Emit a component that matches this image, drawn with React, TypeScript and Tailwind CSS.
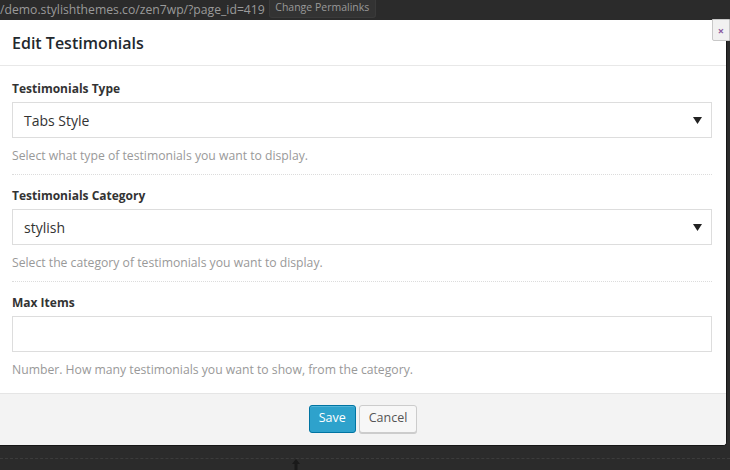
import React from "react";

// Edit Testimonials shortcode dialog, on top of the dark WP admin backdrop.

const font = { fontFamily: '"Open Sans", "Noto Sans", sans-serif' };

function Caret() {
  return (
    <svg width="9" height="7" viewBox="0 0 9 7" className="shrink-0">
      <path d="M0 0 L9 0 L4.5 7 Z" fill="#222" />
    </svg>
  );
}

type FieldProps = {
  label: string;
  help: string;
  value?: string;
  select?: boolean;
  first?: boolean;
  last?: boolean;
};

function Field({ label, help, value, select, first, last }: FieldProps) {
  return (
    <div className={(first ? "pt-[14px]" : "pt-[12px]") + (last ? " pb-[14px]" : "")}>
      <div className="text-[12px] leading-[18px] font-bold text-[#333]">{label}</div>
      <div className="mt-[4px] flex h-[36px] items-center justify-between border border-[#dddddd] bg-white pl-[11px] pr-[9px] text-[14px] text-[#333]">
        <span>{value}</span>
        {select && <Caret />}
      </div>
      <div className="mt-[9px] text-[12.2px] leading-[18px] text-[#999]">{help}</div>
      {!last && <div className="mt-[9px] border-b border-dotted border-[#dcdcdc]" />}
    </div>
  );
}

export default function App() {
  return (
    <div style={font} className="relative h-[470px] w-[730px] overflow-hidden bg-[#2b2b2b]">
      {/* admin page behind the modal */}
      <div className="flex h-[20px] items-center gap-[4px] bg-[#2b2b2b]">
        <span className="text-[12.2px] text-[#9a9a9a] whitespace-nowrap">
          /demo.stylishthemes.co/zen7wp/?page_id=419
        </span>
        <span className="-mt-[3px] flex h-[19px] w-[107px] items-center justify-center rounded-b-[3px] border border-t-0 border-[#3a3a3a] bg-[#333] text-[10.5px] text-[#999]">
          Change Permalinks
        </span>
      </div>

      <div className="flex h-[426px] w-[727px] flex-col overflow-hidden rounded-br-[4px] border-r border-b border-[#161616] bg-white">
        <div className="flex h-[46px] shrink-0 items-center border-b border-[#e8e8e8] px-[12px] text-[16px] font-semibold text-[#23282d]">
          Edit Testimonials
        </div>
        <div className="pl-[12px] pr-[14px]">
          <Field first label="Testimonials Type" value="Tabs Style" select help="Select what type of testimonials you want to display." />
          <Field label="Testimonials Category" value="stylish" select help="Select the category of testimonials you want to display." />
          <Field last label="Max Items" help="Number. How many testimonials you want to show, from the category." />
        </div>
        <div className="flex flex-1 items-center justify-center gap-[3px] border-t border-[#e5e5e5] bg-[#f3f3f3] pb-[2px]">
          <button className="h-[28px] rounded-[3px] border border-[#0074a2] bg-[#2ea2cc] px-[9px] text-[12.5px] text-white shadow-[inset_0_1px_0_rgba(120,200,230,0.5)]">
            Save
          </button>
          <button className="h-[28px] rounded-[3px] border border-[#cccccc] bg-[#f7f7f7] px-[9px] text-[12.5px] text-[#555] shadow-[0_1px_0_#ccc]">
            Cancel
          </button>
        </div>
      </div>

      <div className="relative h-[24px]">
        <div className="mt-[12px] border-t border-dashed border-[#3c3c3c]" />
        <svg className="absolute left-[291px] top-[1px]" width="10" height="18" viewBox="0 0 10 18">
          <path d="M5 0 L9 5 L6.5 5 L6.5 13 L9 13 L5 18 L1 13 L3.5 13 L3.5 5 L1 5 Z" fill="#1a1a1a" />
        </svg>
      </div>

      {/* close box, sits over the modal corner */}
      <div className="absolute right-0 top-[19px] flex h-[22px] w-[18px] items-center justify-center rounded-bl-[2px] border border-[#c8c8c8] bg-[#f1f1f1]">
        <span className="text-[11px] leading-none font-bold text-[#8a5a9e]">×</span>
      </div>
    </div>
  );
}
